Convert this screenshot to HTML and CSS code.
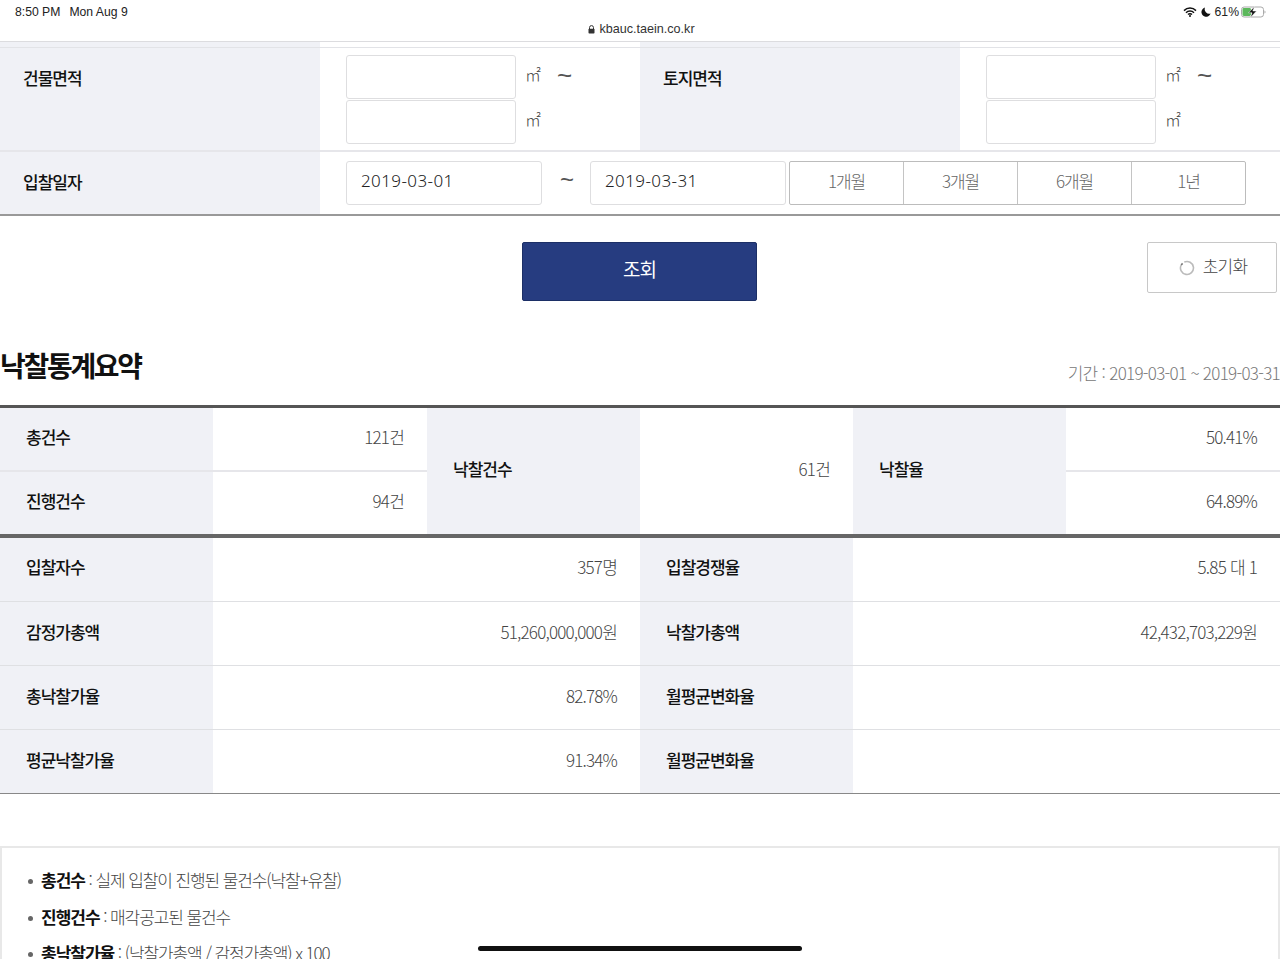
FILE: index.html
```html
<!DOCTYPE html>
<html lang="ko">
<head>
<meta charset="utf-8">
<title>낙찰통계요약</title>
<link rel="stylesheet" href="styles.css">
</head>
<body>
<div class="screen">
  <header class="statusbar">
    <div class="status-left"><span>8:50 PM</span><span>Mon Aug 9</span></div>
    <div class="address">
      <svg class="lock" width="7" height="9" viewBox="0 0 7 9"><path d="M1.5 4V2.6a2 2 0 0 1 4 0V4" fill="none" stroke="#333" stroke-width="1"/><rect x="0.5" y="3.8" width="6" height="4.8" rx="0.8" fill="#333"/></svg>
      <span>kbauc.taein.co.kr</span>
    </div>
    <div class="status-right">
      <svg width="14" height="10" viewBox="0 0 14 10"><path d="M1 3.6a8.5 8.5 0 0 1 12 0M3 5.7a5.6 5.6 0 0 1 8 0M5 7.6a2.8 2.8 0 0 1 4 0" fill="none" stroke="#111" stroke-width="1.5"/><circle cx="7" cy="9" r="1" fill="#111"/></svg>
      <svg width="10" height="10" viewBox="0 0 10 10"><path d="M4 0.5A4.7 4.7 0 1 0 9.6 6.6 4.6 4.6 0 0 1 4 0.5z" fill="#111"/></svg>
      <span>61%</span>
      <svg class="battery" width="25" height="12" viewBox="0 0 25 12"><rect x="0.5" y="1" width="22" height="10" rx="2.6" fill="none" stroke="#aaa"/><rect x="1.5" y="2" width="8.5" height="8" rx="1.4" fill="#5cb85c"/><path d="M13.5 0.5 7.5 6.8h3.5L9.5 11.5 15.5 5h-3.7z" fill="#111" stroke="#fff" stroke-width="0.5"/><path d="M23.5 4.4v3.2c.7-.2 1-.9 1-1.6s-.3-1.4-1-1.6z" fill="#aaa"/></svg>
    </div>
  </header>

  <section class="form">
    <div class="form-row strip">
      <div class="f-label"></div><div></div><div class="f-label"></div><div></div>
    </div>
    <div class="form-row area">
      <div class="f-label">건물면적</div>
      <div class="f-range">
        <div class="f-line"><div class="input"></div><span class="unit">㎡</span><span class="tilde">~</span></div>
        <div class="f-line"><div class="input"></div><span class="unit">㎡</span></div>
      </div>
      <div class="f-label">토지면적</div>
      <div class="f-range">
        <div class="f-line"><div class="input"></div><span class="unit">㎡</span><span class="tilde">~</span></div>
        <div class="f-line"><div class="input"></div><span class="unit">㎡</span></div>
      </div>
    </div>
    <div class="date-row">
      <div class="f-label">입찰일자</div>
      <div class="date-cell">
        <div class="input date">2019-03-01</div>
        <span class="tilde date-tilde">~</span>
        <div class="input date">2019-03-31</div>
        <div class="segments"><span>1개월</span><span>3개월</span><span>6개월</span><span>1년</span></div>
      </div>
    </div>
  </section>

  <section class="actions">
    <button class="search">조회</button>
    <button class="reset">
      <svg width="16" height="16" viewBox="0 0 16 16"><path d="M5.2 2.1A6.5 6.5 0 1 1 2.2 5" fill="none" stroke="#bbb" stroke-width="1.6"/><path d="M2.2 5 3.6 3.4" fill="none" stroke="#777" stroke-width="1.6"/></svg>
      <span>초기화</span>
    </button>
  </section>

  <section class="title-row">
    <h1>낙찰통계요약</h1>
    <p class="period">기간 : 2019-03-01 ~ 2019-03-31</p>
  </section>

  <section class="stats-top">
    <div class="th">총건수</div><div class="td">121건</div>
    <div class="th span2">낙찰건수</div><div class="td span2">61건</div>
    <div class="th span2">낙찰율</div><div class="td">50.41%</div>
    <div class="th line">진행건수</div><div class="td line">94건</div>
    <div class="td line">64.89%</div>
  </section>

  <section class="stats-bottom">
    <div class="th">입찰자수</div><div class="td">357명</div><div class="th">입찰경쟁율</div><div class="td">5.85 대 1</div>
    <div class="th">감정가총액</div><div class="td">51,260,000,000원</div><div class="th">낙찰가총액</div><div class="td">42,432,703,229원</div>
    <div class="th">총낙찰가율</div><div class="td">82.78%</div><div class="th">월평균변화율</div><div class="td"></div>
    <div class="th">평균낙찰가율</div><div class="td">91.34%</div><div class="th">월평균변화율</div><div class="td"></div>
  </section>

  <section class="notes">
    <ul>
      <li><b>총건수</b> : 실제 입찰이 진행된 물건수(낙찰+유찰)</li>
      <li><b>진행건수</b> : 매각공고된 물건수</li>
      <li><b>총낙찰가율</b> : (낙찰가총액 / 감정가총액) x 100</li>
    </ul>
  </section>

  <div class="home-indicator"></div>
</div>
</body>
</html>
```
FILE: styles.css
```css
* { box-sizing: border-box; }
html, body { margin: 0; padding: 0; background: #fff; }
body {
  font-family: "Noto Sans CJK KR", "Noto Sans", sans-serif;
  color: #111;
}
.screen {
  position: relative;
  width: 1280px;
  height: 959px;
  overflow: hidden;
}

/* status bar */
.statusbar {
  position: relative;
  height: 42px;
  border-bottom: 1px solid #dcdcdf;
  font-family: "Liberation Sans", sans-serif;
  font-size: 12.2px;
  color: #222;
}
.status-left {
  position: absolute;
  left: 15px;
  top: 5px;
  display: flex;
  gap: 9px;
  line-height: 14px;
}
.address {
  display: flex;
  justify-content: center;
  align-items: center;
  gap: 4px;
  padding: 22px 0 0 3px;
  line-height: 14px;
  font-size: 12.6px;
  color: #333;
}
.status-right {
  position: absolute;
  right: 14px;
  top: 5px;
  display: flex;
  align-items: center;
  gap: 4px;
  line-height: 14px;
}
.battery { margin-left: -2px; }

/* search form */
.form-row {
  display: grid;
  grid-template-columns: 320px 320px 320px 320px;
}
.strip {
  height: 6px;
  border-bottom: 1px solid #e2e3e7;
}
.area {
  height: 104px;
  border-bottom: 2px solid #e6e6ea;
}
.f-label {
  background: #f0f1f6;
  padding-left: 23px;
  font-size: 17px;
  font-weight: 500;
  letter-spacing: -1px;
  color: #111;
}
.area .f-label { padding-top: 17px; line-height: 26px; }
.f-range {
  padding: 7px 0 0 26px;
  display: flex;
  flex-direction: column;
  gap: 1px;
}
.f-line {
  display: flex;
  align-items: center;
  height: 44px;
}
.input {
  width: 170px;
  height: 44px;
  background: #fff;
  border: 1px solid #dedee0;
  border-radius: 3px;
}
.unit {
  margin-left: 9px;
  font-size: 16px;
  font-weight: 300;
  color: #444;
  position: relative;
  top: -3px;
}
.tilde {
  margin-left: 16px;
  font-family: "Liberation Sans", sans-serif;
  font-size: 26px;
  font-weight: normal;
  line-height: 20px;
  color: #555;
  position: relative;
  top: -2px;
}
.date-row {
  display: grid;
  grid-template-columns: 320px 960px;
  height: 62px;
}
.date-row .f-label { line-height: 60px; }
.date-cell {
  display: flex;
  align-items: flex-start;
  padding: 9px 0 0 26px;
}
.input.date {
  width: 196px;
  height: 44px;
  padding-left: 14px;
  line-height: 38px;
  font-size: 17px;
  font-weight: 300;
  font-family: "Noto Sans", sans-serif;
  color: #222;
  letter-spacing: 0.4px;
}
.date-tilde {
  width: 48px;
  margin: 0;
  text-align: center;
  line-height: 42px;
  top: -2px;
  left: 1px;
  font-size: 24px;
}
.segments {
  display: flex;
  margin-left: 3px;
  height: 44px;
  width: 457px;
  border: 1px solid #bcbcbc;
  border-radius: 2px;
}
.segments span {
  flex: 1;
  text-align: center;
  line-height: 37px;
  font-size: 17px;
  font-weight: 300;
  letter-spacing: -1.2px;
  color: #666;
  border-left: 1px solid #c4c4c4;
}
.segments span:first-child { border-left: 0; }

/* buttons */
.actions {
  position: relative;
  height: 135px;
  border-top: 2px solid #999;
  display: flex;
  justify-content: center;
  padding: 26px 1px 0 0;
}
.search {
  width: 235px;
  height: 59px;
  padding: 0 0 6px;
  background: #263c80;
  border: 1px solid #1c2f66;
  border-radius: 2px;
  color: #fff;
  font-family: inherit;
  font-size: 19px;
  font-weight: 400;
  letter-spacing: -1px;
}
.reset {
  position: absolute;
  left: 1147px;
  top: 26px;
  width: 130px;
  height: 51px;
  padding: 0 0 0 2px;
  display: flex;
  align-items: center;
  justify-content: center;
  gap: 8px;
  background: #fff;
  border: 1px solid #c8c8c8;
  border-radius: 2px;
  font-family: inherit;
  font-size: 17px;
  font-weight: 300;
  letter-spacing: -0.8px;
  color: #444;
}
.reset span { padding-bottom: 4px; }

/* heading */
.title-row {
  display: flex;
  justify-content: space-between;
  align-items: flex-end;
  height: 56px;
  padding-bottom: 19px;
}
.title-row h1 {
  margin: 0;
  font-size: 28px;
  line-height: 42px;
  font-weight: 700;
  letter-spacing: -2.3px;
  color: #111;
}
.period {
  margin: 0;
  font-size: 17px;
  line-height: 26px;
  font-weight: 300;
  letter-spacing: -0.7px;
  color: #777;
}

/* tables */
.stats-top, .stats-bottom {
  display: grid;
  grid-template-columns: 213px 214px 213px 213px 213px 214px;
}
.stats-top {
  border-top: 3px solid #555;
  border-bottom: 4px solid #666;
  grid-template-rows: 62px 64px;
}
.stats-bottom {
  grid-template-columns: 213px 427px 213px 427px;
  grid-template-rows: 63px 64px 64px 64px;
  border-bottom: 1px solid #888;
}
.th, .td {
  display: flex;
  align-items: center;
  padding-bottom: 6px;
  font-size: 17px;
  letter-spacing: -1px;
}
.th {
  background: #f0f1f6;
  padding-left: 26px;
  font-weight: 500;
  color: #111;
}
.td {
  justify-content: flex-end;
  padding-right: 23px;
  font-weight: 300;
  letter-spacing: -0.8px;
  color: #444;
}
.span2 { grid-row: span 2; }
.stats-top .line { border-top: 2px solid #e6e6ea; }
.stats-bottom .th, .stats-bottom .td { border-top: 1px solid #dfe0e3; padding-bottom: 4px; }
.stats-bottom > :nth-child(-n+4) { border-top: 0; padding-bottom: 6px; }

/* notes */
.notes {
  margin-top: 52px;
  height: 130px;
  border: 2px solid #e8e8e8;
  padding: 14px 0 0 26px;
}
.notes ul {
  margin: 0;
  padding: 0;
  list-style: none;
}
.notes li {
  position: relative;
  padding-left: 13px;
  height: 36.5px;
  line-height: 36px;
  font-size: 17px;
  font-weight: 300;
  letter-spacing: -1.1px;
  color: #444;
}
.notes li::before {
  content: "";
  position: absolute;
  left: 0;
  top: 17px;
  width: 5px;
  height: 5px;
  border-radius: 50%;
  background: #666;
}
.notes b { font-weight: 700; letter-spacing: -1px; color: #111; }

.home-indicator {
  position: absolute;
  left: 478px;
  top: 946px;
  width: 324px;
  height: 5px;
  border-radius: 3px;
  background: #111;
}
```
